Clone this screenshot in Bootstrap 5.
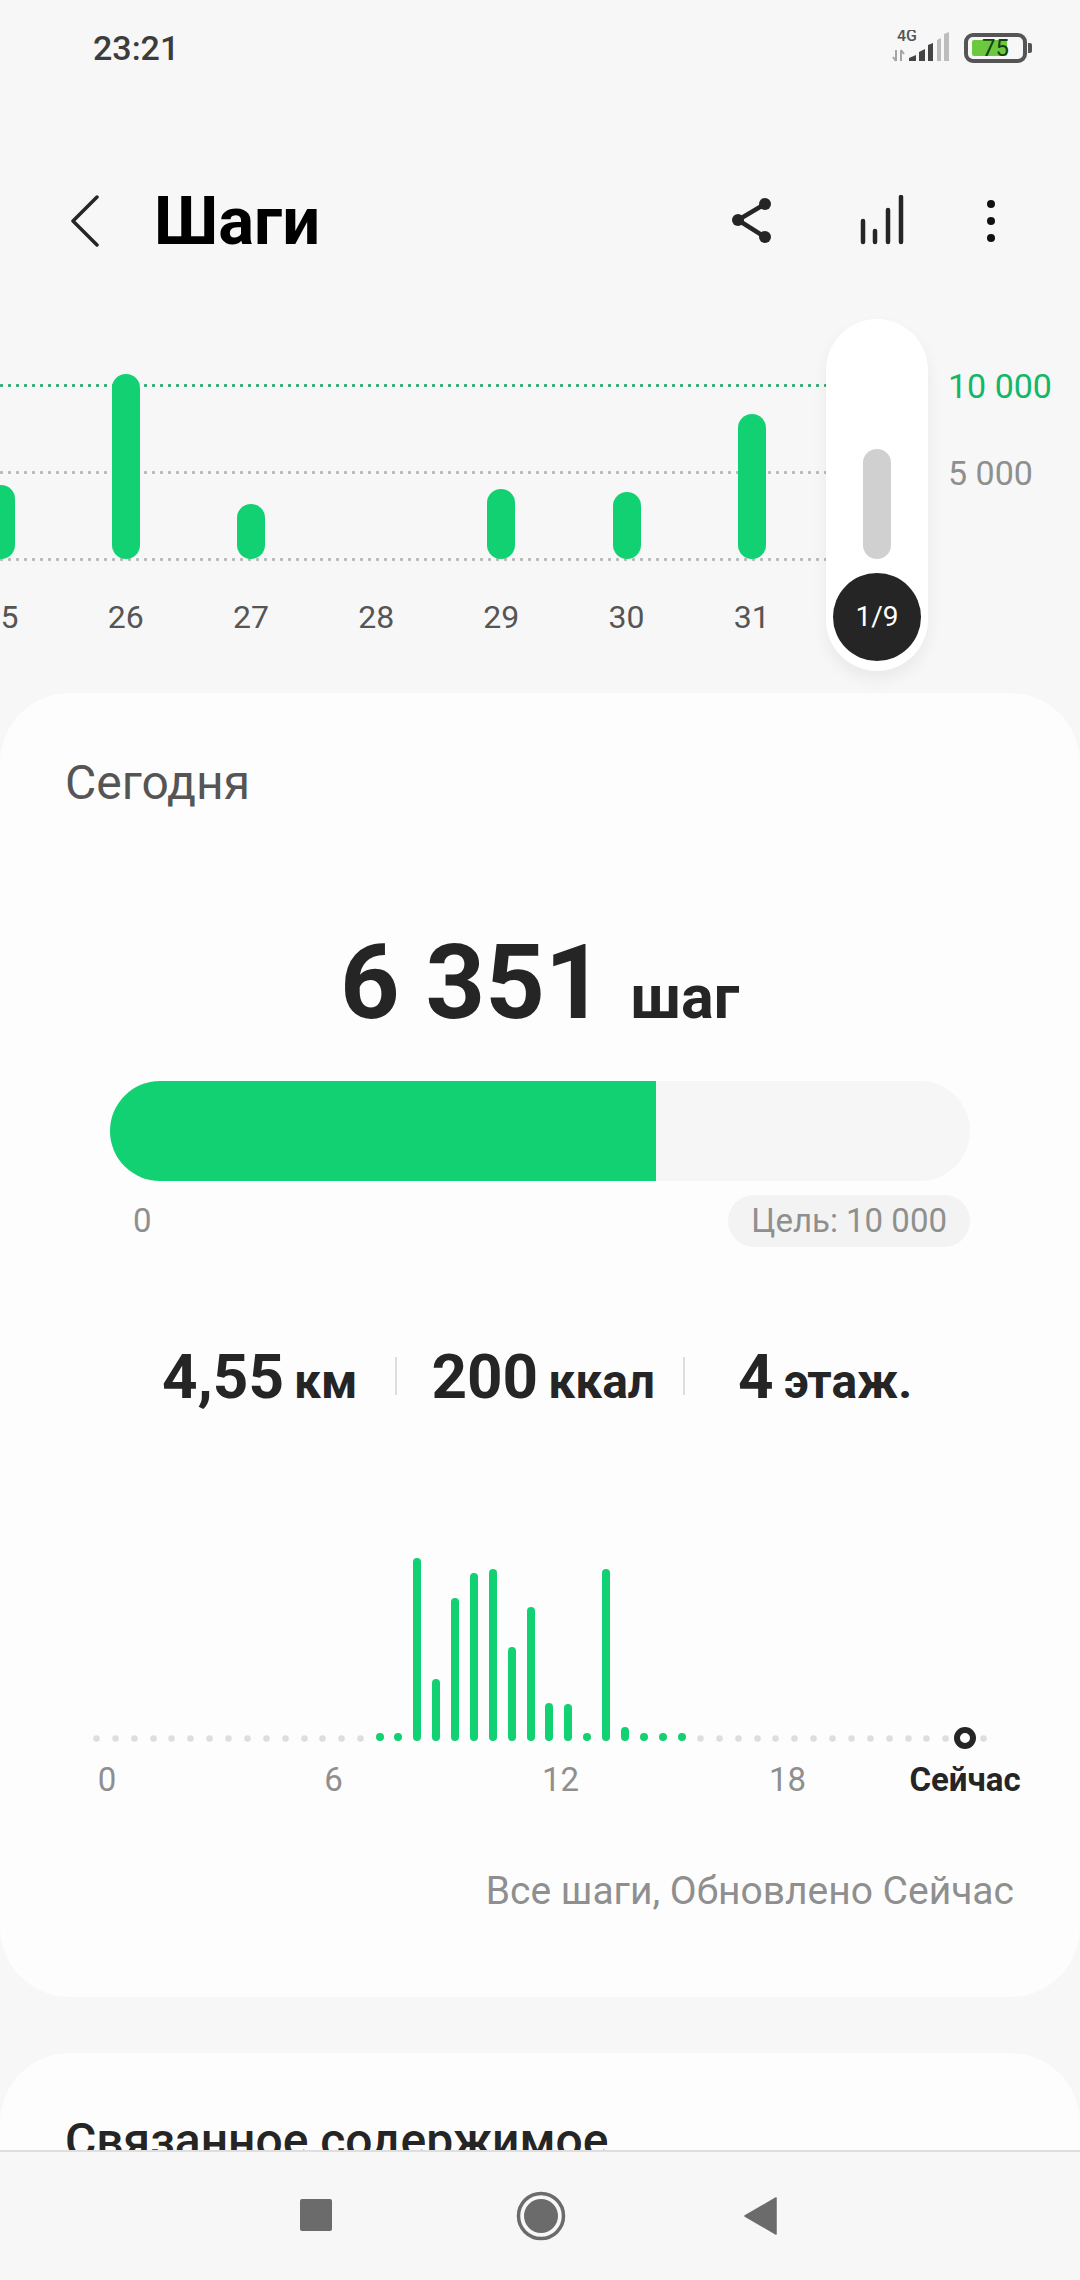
<!DOCTYPE html>
<html lang="ru">

<head>
    <meta charset="UTF-8">
    <meta name="viewport" content="width=device-width, initial-scale=1.0">
    <title>Шаги</title>
    <link href="https://cdn.jsdelivr.net/npm/bootstrap@5.3.0/dist/css/bootstrap.min.css" rel="stylesheet">
    <style>
        body {
            font-family: Roboto, "Liberation Sans", sans-serif;
            background-color: #f7f7f7;
            color: #252525;
            width: 1080px;
            height: 2280px;
            overflow: hidden;
        }

        .phone-main {
            height: 2150px;
            overflow: hidden;
        }

        .status-row {
            height: 96px;
            padding: 0 48px 0 93px;
        }

        .status-time {
            font-size: 34px;
            font-weight: 500;
            color: #3c3c3c;
        }

        .net-icon {
            margin-right: 15px;
        }

        .batt-shell {
            width: 63px;
            height: 30px;
            border: 4px solid #555;
            border-radius: 9px;
            padding: 3px 4px;
        }

        .batt-fill {
            width: 35px;
            height: 100%;
            background-color: #6cc83f;
            border-radius: 2px;
        }

        .batt-num {
            top: 0;
            left: 0;
            width: 55px;
            font-size: 24px;
            line-height: 22px;
            color: #17400f;
        }

        .batt-nub {
            width: 4px;
            height: 10px;
            background-color: #555;
            border-radius: 0 2px 2px 0;
            margin-left: 1px;
        }

        .head-row {
            margin-top: 60px;
            height: 130px;
            padding: 0 83px 0 70px;
        }

        .head-title {
            font-size: 67px;
            font-weight: 700;
            color: #000;
            margin: 0 0 0 55px;
            line-height: 130px;
        }

        .head-bars {
            margin-left: 86px;
        }

        .head-dots {
            margin-left: 81px;
        }

        .week-chart {
            height: 407px;
            overflow: hidden;
        }

        .guide-line {
            left: 0;
            width: 830px;
            height: 3px;
            background-image: radial-gradient(circle at 1.5px 1.5px, #b8b8b8 1.3px, transparent 1.8px);
            background-size: 8px 3px;
        }

        .guide-goal {
            background-image: radial-gradient(circle at 1.5px 1.5px, #22b070 1.3px, transparent 1.8px);
            top: 98px;
        }

        .guide-mid {
            top: 185px;
        }

        .guide-zero {
            top: 272px;
        }

        .day-row {
            margin-left: -62px;
            padding-top: 88px;
        }

        .day-col {
            width: 125.2px;
            flex: none;
        }

        .day-plot {
            height: 185px;
        }

        .day-bar {
            width: 28px;
            background-color: #12d172;
            border-radius: 14px;
        }

        .day-label {
            margin-top: 38px;
            font-size: 32px;
            line-height: 40px;
            color: #555;
        }

        .scroll-pill {
            left: 826px;
            top: 33px;
            width: 102px;
            height: 352px;
            background-color: #fff;
            border-radius: 51px;
            box-shadow: 0 8px 16px rgba(0, 0, 0, 0.06);
        }

        .scroll-bar {
            left: 37px;
            top: 130px;
            width: 28px;
            height: 110px;
            background-color: #d0d0d0;
            border-radius: 14px;
        }

        .scroll-knob {
            left: 7px;
            top: 254px;
            width: 88px;
            height: 88px;
            background-color: #252525;
            color: #fff;
            font-size: 28px;
        }

        .axis-num {
            left: 948px;
            font-size: 34px;
            line-height: 40px;
            color: #8f8f8f;
        }

        .axis-goal {
            top: 80px;
            color: #12b868;
        }

        .axis-mid {
            top: 167px;
        }

        .sheet {
            background-color: #fdfdfd;
            border-radius: 70px;
        }

        .sheet-today {
            height: 1304px;
            padding-top: 60px;
        }

        .today-label {
            font-size: 48px;
            line-height: 60px;
            color: #555;
            margin-left: 65px;
        }

        .step-total {
            margin-top: 110px;
            height: 120px;
            line-height: 120px;
            padding-left: 340px;
        }

        .step-num {
            font-size: 104px;
            font-weight: 700;
        }

        .step-unit {
            font-size: 61px;
            font-weight: 700;
            margin-left: 26px;
        }

        .goal-track {
            margin: 38px 110px 0;
            height: 100px;
            background-color: #f6f6f6;
            border-radius: 50px;
            overflow: hidden;
        }

        .goal-fill {
            height: 100%;
            background-color: #12d172;
        }

        .goal-meta {
            margin: 14px 110px 0 133px;
            color: #8f8f8f;
            font-size: 33px;
        }

        .goal-pill {
            height: 52px;
            padding: 0 23px;
            background-color: #f3f3f3;
            border-radius: 26px;
        }

        .stat-row {
            margin-top: 94px;
            padding-left: 162px;
            height: 70px;
        }

        .stat-val {
            font-size: 62px;
            font-weight: 700;
        }

        .stat-unit {
            font-size: 48px;
            font-weight: 700;
            margin-left: 10px;
        }

        .stat-rule {
            width: 2px;
            height: 38px;
            background-color: #dedede;
        }

        .rule-first {
            margin: 0 34px 0 38px;
        }

        .rule-second {
            margin: 0 53px 0 28px;
        }

        .hour-chart {
            margin: 144px 0 0 87px;
            height: 186px;
        }

        .hour-col {
            width: 18.89px;
            flex: none;
        }

        .hour-dot {
            width: 9px;
            height: 9px;
            border-radius: 50%;
            background-color: #dedede;
            margin-bottom: -1.5px;
            transform: scale(0.72);
        }

        .hour-bar {
            width: 8px;
            background-color: #12d172;
            border-radius: 4px;
        }

        .hour-now {
            width: 22px;
            height: 22px;
            border: 6px solid #252525;
            border-radius: 50%;
            background-color: #fff;
            margin-bottom: -8px;
            flex: none;
        }

        .hour-axis {
            margin: 19px 0 0 51px;
            font-size: 33px;
            line-height: 40px;
            color: #8f8f8f;
        }

        .hour-tick {
            flex: none;
            width: 227px;
            text-align: center;
        }

        .tick-zero {
            width: 112px;
            margin-right: 57px;
        }

        .tick-now {
            width: 128px;
            font-size: 33px;
            font-weight: 700;
            color: #252525;
            white-space: nowrap;
        }

        .sync-note {
            margin: 66px 66px 0 0;
            font-size: 39px;
            line-height: 50px;
            color: #8f8f8f;
        }

        .sheet-related {
            margin-top: 56px;
            height: 300px;
            padding: 60px 0 0 65px;
            font-size: 48px;
            font-weight: 500;
            line-height: 56px;
        }

        .soft-nav {
            height: 130px;
            border-top: 2px solid #dedede;
            background-color: #f7f7f7;
            position: relative;
        }

        .nav-square {
            left: 300px;
            top: 47px;
            width: 32px;
            height: 32px;
            background-color: #6b6b6b;
            border-radius: 2px;
        }

        .nav-home {
            left: 516px;
            top: 39px;
        }

        .nav-back {
            left: 744px;
            top: 45px;
        }
    </style>
</head>

<body>
    <div class="phone-main">
        <!-- status bar -->
        <div class="status-row d-flex align-items-center justify-content-between">
            <span class="status-time">23:21</span>
            <div class="d-flex align-items-center">
                <svg class="net-icon" width="57" height="36" viewBox="0 0 57 36">
                    <text x="5" y="11" font-family="Roboto" font-size="16" font-weight="500" fill="#555">4G</text>
                    <path d="M4 20v11M1 27l3 4M9 31V20M12 24l-3-4" stroke="#a5a5a5" stroke-width="2" fill="none" />
                    <path d="M17 31v-3l7-3v6z" fill="#444" />
                    <path d="M27 31V22l6-3v12z" fill="#444" />
                    <path d="M36 31V15l5-2v18z" fill="#444" />
                    <path d="M45 31V10l4-2v23z" fill="#bdbdbd" />
                    <path d="M52 31V4l5-2v29z" fill="#bdbdbd" />
                </svg>
                <div class="batt-shell position-relative">
                    <div class="batt-fill"></div>
                    <span class="batt-num position-absolute text-center">75</span>
                </div>
                <div class="batt-nub"></div>
            </div>
        </div>

        <!-- title row -->
        <div class="head-row d-flex align-items-center">
            <svg width="29" height="52" viewBox="0 0 29 52">
                <path d="M27 2L3 26l24 24" fill="none" stroke="#252525" stroke-width="3.5" stroke-linecap="round" stroke-linejoin="round" />
            </svg>
            <h1 class="head-title">Шаги</h1>
            <div class="d-flex align-items-center ms-auto">
                <svg width="42" height="46" viewBox="0 0 42 46">
                    <path d="M33 6L6 22l27 17" fill="none" stroke="#252525" stroke-width="4.5" />
                    <circle cx="33" cy="6" r="6" fill="#252525" />
                    <circle cx="6" cy="22" r="6" fill="#252525" />
                    <circle cx="33" cy="39" r="6" fill="#252525" />
                </svg>
                <svg class="head-bars" width="44" height="52" viewBox="0 0 44 52">
                    <path d="M3 47V26M15 47V36M28 47V15M41 47V2" fill="none" stroke="#252525" stroke-width="4.5" stroke-linecap="round" />
                </svg>
                <svg class="head-dots" width="12" height="46" viewBox="0 0 12 46">
                    <circle cx="6" cy="6" r="4" fill="#111" />
                    <circle cx="6" cy="23" r="4" fill="#111" />
                    <circle cx="6" cy="40" r="4" fill="#111" />
                </svg>
            </div>
        </div>

        <!-- days chart -->
        <div class="week-chart position-relative">
            <div class="guide-line guide-goal position-absolute"></div>
            <div class="guide-line guide-mid position-absolute"></div>
            <div class="guide-line guide-zero position-absolute"></div>
            <div class="day-row d-flex position-relative" id="dayRow"></div>
            <div class="scroll-pill position-absolute">
                <div class="scroll-bar position-absolute"></div>
                <div class="scroll-knob position-absolute rounded-circle d-flex align-items-center justify-content-center">1/9</div>
            </div>
            <span class="axis-num axis-goal position-absolute">10 000</span>
            <span class="axis-num axis-mid position-absolute">5 000</span>
        </div>

        <!-- today card -->
        <div class="sheet sheet-today">
            <div class="today-label">Сегодня</div>
            <div class="step-total"><span class="step-num">6 351</span><span class="step-unit">шаг</span></div>
            <div class="goal-track"><div class="goal-fill" style="width: 63.51%"></div></div>
            <div class="goal-meta d-flex align-items-center justify-content-between">
                <span>0</span>
                <span class="goal-pill d-flex align-items-center">Цель: 10 000</span>
            </div>
            <div class="stat-row d-flex align-items-center">
                <span><span class="stat-val">4,55</span><span class="stat-unit">км</span></span>
                <span class="stat-rule rule-first"></span>
                <span><span class="stat-val">200</span><span class="stat-unit">ккал</span></span>
                <span class="stat-rule rule-second"></span>
                <span><span class="stat-val">4</span><span class="stat-unit">этаж.</span></span>
            </div>
            <div class="hour-chart d-flex align-items-end" id="hourChart"></div>
            <div class="hour-axis d-flex">
                <span class="hour-tick tick-zero">0</span>
                <span class="hour-tick">6</span>
                <span class="hour-tick">12</span>
                <span class="hour-tick">18</span>
                <span class="hour-tick tick-now">Сейчас</span>
            </div>
            <div class="sync-note text-end">Все шаги, Обновлено Сейчас</div>
        </div>

        <div class="sheet sheet-related">Связанное содержимое</div>
    </div>

    <!-- system nav -->
    <div class="soft-nav">
        <div class="nav-square position-absolute"></div>
        <svg class="nav-home position-absolute" width="50" height="50" viewBox="0 0 50 50">
            <circle cx="25" cy="25" r="22.5" fill="none" stroke="#6b6b6b" stroke-width="3.5" />
            <circle cx="25" cy="25" r="17" fill="#6b6b6b" />
        </svg>
        <svg class="nav-back position-absolute" width="34" height="38" viewBox="0 0 34 38">
            <path d="M32 1v36L1 19z" fill="#6b6b6b" stroke="#6b6b6b" stroke-width="1.5" stroke-linejoin="round" />
        </svg>
    </div>

    <script>
        // days: label and bar height in px
        const days = [['25', 74], ['26', 185], ['27', 55], ['28', 0], ['29', 70], ['30', 67], ['31', 145]];
        document.getElementById('dayRow').innerHTML = days.map(([label, h]) => `
            <div class="day-col text-center">
                <div class="day-plot d-flex align-items-end justify-content-center">
                    ${h ? `<div class="day-bar" style="height:${h}px"></div>` : ''}
                </div>
                <div class="day-label">${label}</div>
            </div>`).join('');

        // half hours: 0 = empty, otherwise green bar height
        const hours = {15: 8, 16: 8, 17: 183, 18: 62, 19: 143, 20: 168, 21: 172, 22: 94, 23: 134, 24: 38, 25: 37, 26: 8, 27: 172, 28: 14, 29: 8, 30: 8, 31: 8};
        let html = '';
        for (let i = 0; i < 48; i++) {
            let inner = '<div class="hour-dot"></div>';
            if (i === 46) inner = '<div class="hour-now"></div>';
            else if (hours[i]) inner = `<div class="hour-bar" style="height:${hours[i]}px"></div>`;
            html += `<div class="hour-col d-flex justify-content-center">${inner}</div>`;
        }
        document.getElementById('hourChart').innerHTML = html;
    </script>
    <script src="https://cdn.jsdelivr.net/npm/bootstrap@5.3.0/dist/js/bootstrap.bundle.min.js"></script>
</body>

</html>
